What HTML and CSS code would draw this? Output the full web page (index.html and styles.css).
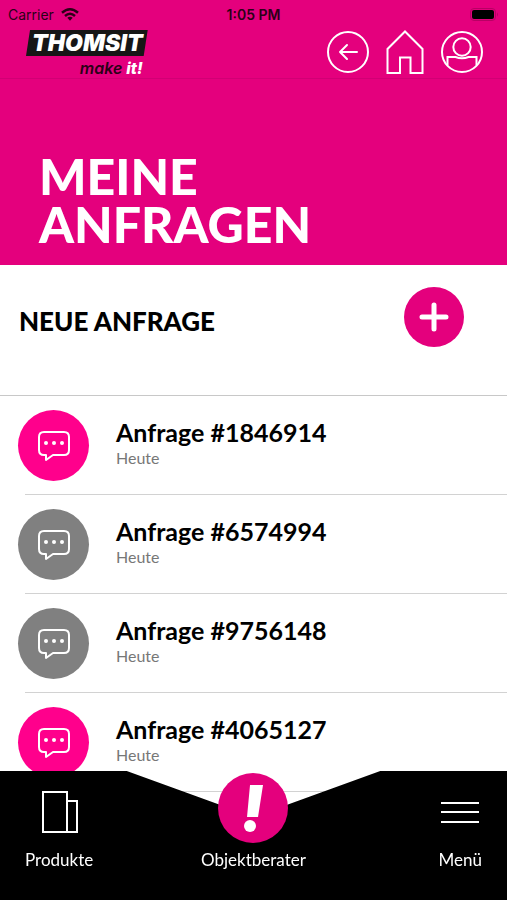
FILE: index.html
```html
<!DOCTYPE html>
<html lang="de">
<head>
    <meta charset="UTF-8">
    <meta name="viewport" content="width=device-width, initial-scale=1.0">
    <title>Meine Anfragen</title>
    <link rel="stylesheet" href="styles.css">
</head>
<body>
    <svg class="symbols" aria-hidden="true">
        <symbol id="chat" viewBox="0 0 34 32">
            <path d="M7 2H27Q32 2 32 7V20Q32 25 27 25H16L9 30V25H7Q2 25 2 20V7Q2 2 7 2Z" fill="none" stroke="#fff" stroke-width="2" stroke-linejoin="round" />
            <circle cx="9" cy="13" r="2" fill="#fff" />
            <circle cx="17" cy="13" r="2" fill="#fff" />
            <circle cx="25" cy="13" r="2" fill="#fff" />
        </symbol>
    </svg>

    <div class="app">
        <div class="top">
            <div class="status-bar">
                <div class="carrier">
                    <span>Carrier</span>
                    <svg width="18" height="13" viewBox="0 0 18 13">
                        <g fill="none" stroke="#2b0017" stroke-width="2.5">
                            <path d="M1 4.8Q9 -2.2 17 4.8" />
                            <path d="M4 8Q9 3.6 14 8" />
                        </g>
                        <path d="M6.3 9.8Q9 7.6 11.7 9.8L9 12.7Z" fill="#2b0017" />
                    </svg>
                </div>
                <span class="time">1:05 PM</span>
                <svg class="battery" width="29" height="13" viewBox="0 0 29 13">
                    <rect x="0.5" y="0.5" width="25" height="12" rx="3.5" fill="none" stroke="#b80064" />
                    <rect x="2" y="2" width="22" height="9" rx="2" fill="#000" />
                    <path d="M27 4.5Q29 6.5 27 8.5Z" fill="#b80064" />
                </svg>
            </div>
            <header class="header">
                <div class="logo">
                    <span class="logo-name">THOMSIT</span>
                    <span class="logo-claim">make <b>it!</b></span>
                </div>
                <div class="header-icons">
                    <button type="button" aria-label="Zurück">
                        <svg width="42" height="44" viewBox="0 0 42 44">
                            <circle cx="21" cy="22" r="20" />
                            <path d="M30 22H13M20 15L13 22L20 29" stroke-linecap="round" stroke-linejoin="round" />
                        </svg>
                    </button>
                    <button type="button" aria-label="Startseite">
                        <svg width="38" height="44" viewBox="0 0 38 44">
                            <path d="M1.5 43V19L19 1.5L36.5 19V43H24.5V27.5H14V43Z" />
                        </svg>
                    </button>
                    <button type="button" aria-label="Profil">
                        <svg width="42" height="44" viewBox="0 0 42 44">
                            <circle cx="21" cy="22" r="20" />
                            <circle cx="21" cy="17" r="8.7" />
                            <path d="M6.5 35.5V27H14.5Q21 29.5 27.5 27H35.5V35.5" />
                        </svg>
                    </button>
                </div>
            </header>
            <div class="hero">
                <h1>
                    <span>MEINE</span>
                    <span>ANFRAGEN</span>
                </h1>
            </div>
        </div>

        <main class="content">
            <section class="new-request">
                <h2>NEUE ANFRAGE</h2>
                <button class="add" type="button" aria-label="Neue Anfrage">
                    <svg width="30" height="30" viewBox="0 0 30 30">
                        <path d="M15 3V27M3 15H27" stroke="#fff" stroke-width="5" stroke-linecap="round" />
                    </svg>
                </button>
            </section>

            <ul class="requests">
                <li>
                    <a class="request" href="#">
                        <span class="bubble"><svg><use href="#chat" /></svg></span>
                        <span class="info">
                            <span class="name">Anfrage #1846914</span>
                            <span class="date">Heute</span>
                        </span>
                    </a>
                </li>
                <li>
                    <a class="request" href="#">
                        <span class="bubble closed"><svg><use href="#chat" /></svg></span>
                        <span class="info">
                            <span class="name">Anfrage #6574994</span>
                            <span class="date">Heute</span>
                        </span>
                    </a>
                </li>
                <li>
                    <a class="request" href="#">
                        <span class="bubble closed"><svg><use href="#chat" /></svg></span>
                        <span class="info">
                            <span class="name">Anfrage #9756148</span>
                            <span class="date">Heute</span>
                        </span>
                    </a>
                </li>
                <li>
                    <a class="request" href="#">
                        <span class="bubble"><svg><use href="#chat" /></svg></span>
                        <span class="info">
                            <span class="name">Anfrage #4065127</span>
                            <span class="date">Heute</span>
                        </span>
                    </a>
                </li>
            </ul>
        </main>

        <nav class="tab-bar">
            <a class="tab" href="#">
                <svg width="38" height="44" viewBox="0 0 38 44" fill="none" stroke="#fff" stroke-width="2">
                    <path d="M3 2H27V42H3ZM27 11H37V42H27" />
                </svg>
                <span>Produkte</span>
            </a>
            <a class="tab tab-main" href="#">
                <svg width="70" height="70" viewBox="0 0 70 70">
                    <circle cx="35" cy="35" r="35" fill="#e4007d" />
                    <path d="M32 12H45L40 44H29Z" fill="#fff" />
                    <circle cx="32" cy="53" r="6" fill="#fff" />
                </svg>
                <span>Objektberater</span>
            </a>
            <a class="tab" href="#">
                <svg width="38" height="44" viewBox="0 0 38 44" stroke="#fff" stroke-width="2">
                    <path d="M0 13H38M0 22H38M0 32H38" />
                </svg>
                <span>Menü</span>
            </a>
        </nav>
    </div>
</body>
</html>
```

FILE: styles.css
```css
/* General Styling */
* {
    box-sizing: border-box;
}

body {
    margin: 0;
    font-family: Lato, "Liberation Sans", sans-serif;
    background-color: white;
    color: black;
}

h1, h2, ul {
    margin: 0;
    padding: 0;
}

a {
    color: inherit;
    text-decoration: none;
}

button {
    padding: 0;
    border: none;
    background: none;
    cursor: pointer;
}

svg {
    display: block;
}

.symbols {
    position: absolute;
    width: 0;
    height: 0;
}

.app {
    display: flex;
    flex-direction: column;
    height: 100vh;
}

/* Status bar and header */
.top {
    flex: none;
    background-color: #e4007d;
    color: white;
}

.status-bar {
    display: grid;
    grid-template-columns: 1fr auto 1fr;
    align-items: center;
    height: 28px;
    padding: 0 8px;
    font-family: Inter, sans-serif;
    font-size: 14px;
    color: #2b0017;
}

.carrier {
    display: flex;
    align-items: center;
    gap: 7px;
}

.time {
    font-weight: 600;
}

.battery {
    justify-self: end;
}

.header {
    display: flex;
    justify-content: space-between;
    height: 51px;
    padding: 2px 24px 0 26px;
    border-bottom: 1px solid #d10074;
}

.logo {
    display: flex;
    flex-direction: column;
    align-items: flex-end;
    font-family: Inter, sans-serif;
    font-style: italic;
}

.logo-name {
    padding: 0 5px 0 6px;
    font-size: 23px;
    font-weight: 900;
    line-height: 26px;
    background-color: #161616;
    clip-path: polygon(4px 0, 100% 0, calc(100% - 4px) 100%, 0 100%);
}

.logo-claim {
    padding-right: 5px;
    font-size: 16px;
    font-weight: 600;
    line-height: 24px;
    color: #2b0017;
}

.logo-claim b {
    font-weight: 800;
    color: white;
}

.header-icons {
    display: flex;
    gap: 17px;
    height: 44px;
}

.header-icons svg {
    fill: none;
    stroke: white;
    stroke-width: 2;
}

.hero {
    padding: 73px 39px 17px;
}

.hero h1 {
    font-size: 50px;
    font-weight: 900;
    line-height: 48px;
}

.hero h1 span {
    display: block;
}

/* Requests */
.content {
    flex: 1;
    overflow-y: auto;
    scrollbar-width: none;
    padding-bottom: 129px;
}

.new-request {
    display: flex;
    justify-content: space-between;
    align-items: flex-start;
    height: 131px;
    padding: 22px 43px 0 19px;
    border-bottom: 1px solid #c8c8c8;
}

.new-request h2 {
    font-size: 26px;
    font-weight: 900;
    line-height: 68px;
}

.add {
    display: flex;
    align-items: center;
    justify-content: center;
    width: 60px;
    height: 60px;
    border-radius: 50%;
    background-color: #e4007d;
}

.requests {
    list-style: none;
}

.requests li {
    margin-left: 25px;
    border-bottom: 1px solid #d2d2d2;
}

.request {
    display: flex;
    gap: 27px;
    height: 98px;
    margin-left: -7px;
    padding-top: 14px;
}

.bubble {
    display: flex;
    align-items: center;
    justify-content: center;
    width: 71px;
    height: 71px;
    border-radius: 50%;
    background-color: #ff008c;
}

.bubble.closed {
    background-color: #808080;
}

.bubble svg {
    width: 34px;
    height: 32px;
}

.info {
    display: flex;
    flex-direction: column;
    padding-top: 7px;
}

.name {
    font-size: 25px;
    font-weight: 700;
    line-height: 30px;
}

.date {
    font-size: 16px;
    line-height: 22px;
    color: #777;
}

/* Tab bar, lies over the end of the list */
.tab-bar {
    position: fixed;
    right: 0;
    bottom: 0;
    left: 0;
    display: grid;
    grid-template-columns: 1fr auto 1fr;
    align-items: end;
    height: 129px;
    padding: 0 25px 28px;
    color: white;
}

.tab-bar::before {
    content: "";
    position: absolute;
    inset: 0;
    z-index: -1;
    background-color: black;
    clip-path: polygon(0 0, 25% 0, 50% 46px, 75% 0, 100% 0, 100% 100%, 0 100%);
}

.tab {
    display: flex;
    flex-direction: column;
    align-items: center;
    justify-self: start;
    gap: 14px;
    font-size: 17px;
    line-height: 24px;
}

.tab:last-child {
    justify-self: end;
}

.tab-main {
    gap: 5px;
}
```
